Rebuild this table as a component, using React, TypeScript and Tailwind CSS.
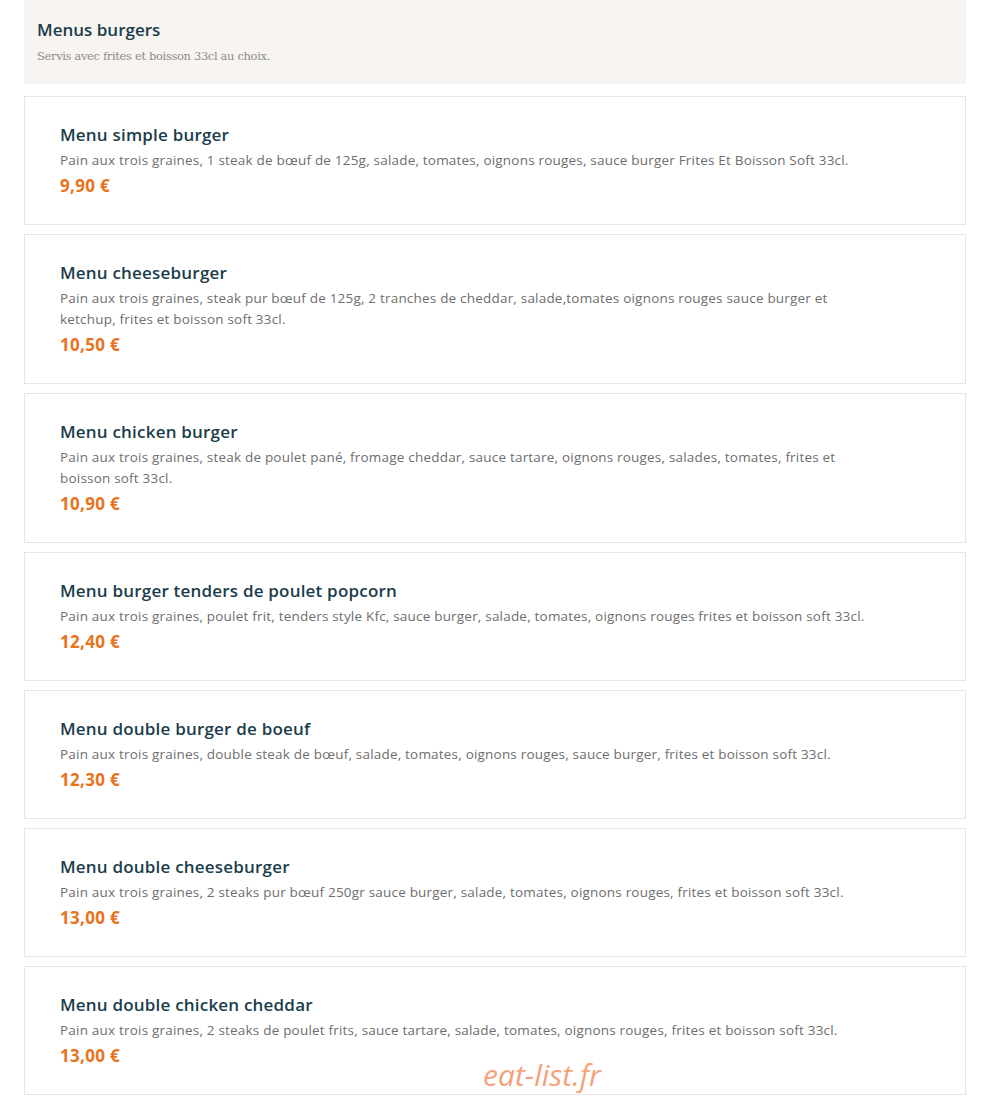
const ITEMS = [
  {
    name: 'Menu simple burger',
    desc: 'Pain aux trois graines, 1 steak de bœuf de 125g, salade, tomates, oignons rouges, sauce burger Frites Et Boisson Soft 33cl.',
    price: '9,90 €',
  },
  {
    name: 'Menu cheeseburger',
    desc: 'Pain aux trois graines, steak pur bœuf de 125g, 2 tranches de cheddar, salade,tomates oignons rouges sauce burger et ketchup, frites et boisson soft 33cl.',
    price: '10,50 €',
  },
  {
    name: 'Menu chicken burger',
    desc: 'Pain aux trois graines, steak de poulet pané, fromage cheddar, sauce tartare, oignons rouges, salades, tomates, frites et boisson soft 33cl.',
    price: '10,90 €',
  },
  {
    name: 'Menu burger tenders de poulet popcorn',
    desc: 'Pain aux trois graines, poulet frit, tenders style Kfc, sauce burger, salade, tomates, oignons rouges frites et boisson soft 33cl.',
    price: '12,40 €',
  },
  {
    name: 'Menu double burger de boeuf',
    desc: 'Pain aux trois graines, double steak de bœuf, salade, tomates, oignons rouges, sauce burger, frites et boisson soft 33cl.',
    price: '12,30 €',
  },
  {
    name: 'Menu double cheeseburger',
    desc: 'Pain aux trois graines, 2 steaks pur bœuf 250gr sauce burger, salade, tomates, oignons rouges, frites et boisson soft 33cl.',
    price: '13,00 €',
  },
  {
    name: 'Menu double chicken cheddar',
    desc: 'Pain aux trois graines, 2 steaks de poulet frits, sauce tartare, salade, tomates, oignons rouges, frites et boisson soft 33cl.',
    price: '13,00 €',
  },
];

function MenuCard({ name, desc, price }: { name: string; desc: string; price: string }) {
  return (
    <div className="border border-[#e6e6e6] bg-white pl-[35px] pr-[80px] pt-[27px] pb-[27px]">
      <h3 className="text-[17px] leading-[22px] font-semibold text-[#1b3d4b] tracking-[0.2px]">{name}</h3>
      <p className="mt-[4px] text-[13.5px] leading-[21px] text-[#6e6e6e] max-w-[822px] tracking-[0.2px]">{desc}</p>
      <div className="mt-[4px] text-[17px] leading-[22px] font-bold text-[#e8731c] tracking-[0.3px]">{price}</div>
    </div>
  );
}

export default function App() {
  return (
    <div className="relative min-h-[1099px] w-[989px] bg-white font-['Open_Sans',sans-serif]">
      <div className="ml-[24px] w-[942px]">
        <div className="bg-[#f7f4f1] pl-[13px] pt-[19px] h-[84px]">
          <h2 className="text-[17px] leading-[22px] font-semibold text-[#1b3d4b]">Menus burgers</h2>
          <p className="mt-[7px] text-[11.5px] leading-[16px] text-[#8c8c8c] font-['DejaVu_Serif',serif] tracking-[-0.35px]">
            Servis avec frites et boisson 33cl au choix.
          </p>
        </div>
        <div className="mt-[12px] flex flex-col gap-[9px]">
          {ITEMS.map((it) => (
            <MenuCard key={it.name} {...it} />
          ))}
        </div>
      </div>
      <div className="absolute left-[483px] top-[1055px] text-[30px] leading-[40px] italic text-[#f4a27a] font-['Open_Sans',sans-serif]">
        eat-list.fr
      </div>
    </div>
  );
}
